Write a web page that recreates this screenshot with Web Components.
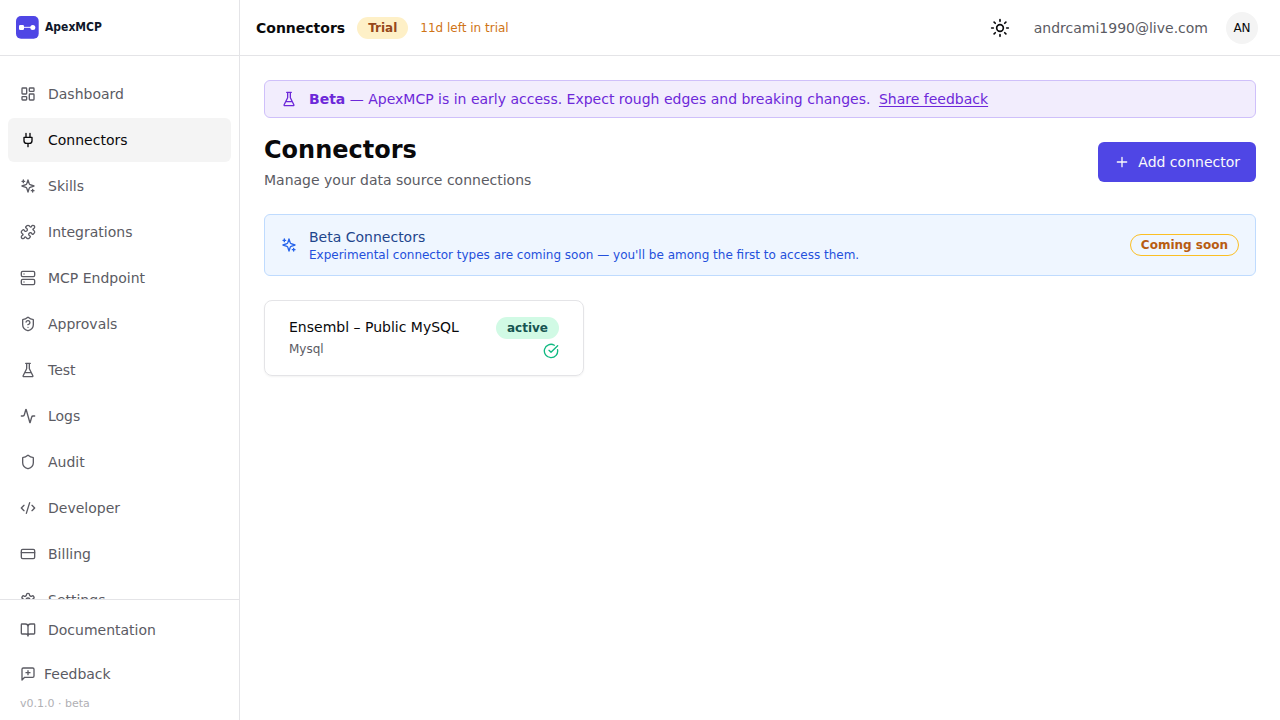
<!DOCTYPE html>
<html lang="en">
<head>
<meta charset="utf-8">
<meta name="viewport" content="width=device-width, initial-scale=1">
<title>Connectors · ApexMCP</title>
<style>
    :root {
        --fg: #09090b;
        --muted: #5b5b63;
        --border: #e4e4e7;
        --accent: #f4f4f4;
        --primary: #4f46e5;
    }

    body {
        margin: 0;
        font: 14px/20px "DejaVu Sans", sans-serif;
        color: var(--fg);
        background: #fff;
    }

    .email {
        color: var(--muted);
    }

    .trial-left {
        font-size: 12px;
        line-height: 16px;
        color: #cf7415;
    }

    .topbar-title {
        margin: 0;
        font-size: 14px;
        line-height: 20px;
    }
</style>
</head>
<body>
<app-shell>
    <side-nav slot="sidebar">
        <nav-link href="#dashboard" icon="dashboard">Dashboard</nav-link>
        <nav-link href="#connectors" icon="plug" active>Connectors</nav-link>
        <nav-link href="#skills" icon="sparkles">Skills</nav-link>
        <nav-link href="#integrations" icon="puzzle">Integrations</nav-link>
        <nav-link href="#endpoint" icon="server">MCP Endpoint</nav-link>
        <nav-link href="#approvals" icon="shieldQuestion">Approvals</nav-link>
        <nav-link href="#test" icon="flask">Test</nav-link>
        <nav-link href="#logs" icon="activity">Logs</nav-link>
        <nav-link href="#audit" icon="shield">Audit</nav-link>
        <nav-link href="#developer" icon="code">Developer</nav-link>
        <nav-link href="#billing" icon="card">Billing</nav-link>
        <nav-link href="#settings" icon="settings">Settings</nav-link>
        <nav-link slot="footer" href="#docs" icon="book">Documentation</nav-link>
        <feedback-button slot="footer">Feedback</feedback-button>
        <span slot="version">v0.1.0 · beta</span>
    </side-nav>

    <top-bar slot="header">
        <h2 class="topbar-title">Connectors</h2>
        <status-badge variant="trial">Trial</status-badge>
        <span class="trial-left">11d left in trial</span>
        <span slot="user" class="email">andrcami1990@live.com</span>
        <span slot="initials">AN</span>
    </top-bar>

    <beta-banner href="#feedback" link="Share feedback"><b>Beta</b> — ApexMCP is in early access. Expect rough edges and breaking changes.</beta-banner>

    <page-heading>
        <span slot="title">Connectors</span>
        <span slot="description">Manage your data source connections</span>
        <primary-button slot="action" icon="plus">Add connector</primary-button>
    </page-heading>

    <info-callout>
        <span slot="title">Beta Connectors</span>
        Experimental connector types are coming soon — you'll be among the first to access them.
        <status-badge slot="badge" variant="soon">Coming soon</status-badge>
    </info-callout>

    <card-grid>
        <connector-card>
            <span slot="name">Ensembl – Public MySQL</span>
            <span slot="type">Mysql</span>
            <status-badge slot="status" variant="active">active</status-badge>
        </connector-card>
    </card-grid>
</app-shell>

<script>
const ICONS = {
    dashboard: '<rect x="3" y="3" width="7" height="9" rx="1"/><rect x="14" y="3" width="7" height="5" rx="1"/><rect x="14" y="12" width="7" height="9" rx="1"/><rect x="3" y="16" width="7" height="5" rx="1"/>',
    plug: '<path d="M12 22v-5M9 8V2M15 8V2M18 8v5a4 4 0 0 1-4 4h-4a4 4 0 0 1-4-4V8Z"/>',
    sparkles: '<path d="m12 3-1.912 5.813a2 2 0 0 1-1.275 1.275L3 12l5.813 1.912a2 2 0 0 1 1.275 1.275L12 21l1.912-5.813a2 2 0 0 1 1.275-1.275L21 12l-5.813-1.912a2 2 0 0 1-1.275-1.275L12 3Z"/><path d="M5 3v4M19 17v4M3 5h4M17 19h4"/>',
    puzzle: '<path d="M19.439 7.85c-.049.322.059.648.289.878l1.568 1.568c.47.47.706 1.087.706 1.704s-.235 1.233-.706 1.704l-1.611 1.611a.98.98 0 0 1-.837.276c-.47-.07-.802-.48-.968-.925a2.501 2.501 0 1 0-3.214 3.214c.446.166.855.497.925.968a.979.979 0 0 1-.276.837l-1.61 1.61a2.404 2.404 0 0 1-1.705.707 2.402 2.402 0 0 1-1.704-.706l-1.568-1.568a1.026 1.026 0 0 0-.877-.29c-.493.074-.84.504-1.02.968a2.5 2.5 0 1 1-3.237-3.237c.464-.18.894-.527.967-1.02a1.026 1.026 0 0 0-.289-.877l-1.568-1.568A2.402 2.402 0 0 1 1.998 12c0-.617.236-1.234.706-1.704L4.23 8.77c.24-.24.581-.353.917-.303.515.077.877.528 1.073 1.01a2.5 2.5 0 1 0 3.259-3.259c-.482-.196-.933-.558-1.01-1.073-.05-.336.062-.676.303-.917l1.525-1.525A2.402 2.402 0 0 1 12 1.998c.617 0 1.234.236 1.704.706l1.568 1.568c.23.23.556.338.877.29.493-.074.84-.504 1.02-.968a2.5 2.5 0 1 1 3.237 3.237c-.464.18-.894.527-.967 1.02Z"/>',
    server: '<rect x="2" y="2" width="20" height="8" rx="2"/><rect x="2" y="14" width="20" height="8" rx="2"/><path d="M6 6h.01M6 18h.01"/>',
    shield: '<path d="M20 13c0 5-3.5 7.5-7.66 8.95a1 1 0 0 1-.67-.01C7.5 20.5 4 18 4 13V6a1 1 0 0 1 1-1c2 0 4.5-1.2 6.24-2.72a1.17 1.17 0 0 1 1.52 0C14.51 3.81 17 5 19 5a1 1 0 0 1 1 1z"/>',
    shieldQuestion: '<path d="M20 13c0 5-3.5 7.5-7.66 8.95a1 1 0 0 1-.67-.01C7.5 20.5 4 18 4 13V6a1 1 0 0 1 1-1c2 0 4.5-1.2 6.24-2.72a1.17 1.17 0 0 1 1.52 0C14.51 3.81 17 5 19 5a1 1 0 0 1 1 1z"/><path d="M9.1 9a3 3 0 0 1 5.82 1c0 2-3 3-3 3M12 17h.01"/>',
    flask: '<path d="M10 2v7.527a2 2 0 0 1-.211.896L4.72 20.55a1 1 0 0 0 .9 1.45h12.76a1 1 0 0 0 .9-1.45l-5.069-10.127A2 2 0 0 1 14 9.527V2M8.5 2h7M7 16h10"/>',
    activity: '<path d="M22 12h-2.48a2 2 0 0 0-1.93 1.46l-2.35 8.36a.25.25 0 0 1-.48 0L9.24 2.18a.25.25 0 0 0-.48 0l-2.35 8.36A2 2 0 0 1 4.49 12H2"/>',
    code: '<path d="m18 16 4-4-4-4M6 8l-4 4 4 4M14.5 4l-5 16"/>',
    card: '<rect x="2" y="5" width="20" height="14" rx="2"/><path d="M2 10h20"/>',
    settings: '<path d="M12.22 2h-.44a2 2 0 0 0-2 2v.18a2 2 0 0 1-1 1.73l-.43.25a2 2 0 0 1-2 0l-.15-.08a2 2 0 0 0-2.73.73l-.22.38a2 2 0 0 0 .73 2.73l.15.1a2 2 0 0 1 1 1.72v.51a2 2 0 0 1-1 1.74l-.15.09a2 2 0 0 0-.73 2.73l.22.38a2 2 0 0 0 2.73.73l.15-.08a2 2 0 0 1 2 0l.43.25a2 2 0 0 1 1 1.73V20a2 2 0 0 0 2 2h.44a2 2 0 0 0 2-2v-.18a2 2 0 0 1 1-1.73l.43-.25a2 2 0 0 1 2 0l.15.08a2 2 0 0 0 2.73-.73l.22-.39a2 2 0 0 0-.73-2.73l-.15-.08a2 2 0 0 1-1-1.74v-.5a2 2 0 0 1 1-1.74l.15-.09a2 2 0 0 0 .73-2.73l-.22-.38a2 2 0 0 0-2.73-.73l-.15.08a2 2 0 0 1-2 0l-.43-.25a2 2 0 0 1-1-1.73V4a2 2 0 0 0-2-2z"/><circle cx="12" cy="12" r="3"/>',
    book: '<path d="M12 7v14M3 18a1 1 0 0 1-1-1V4a1 1 0 0 1 1-1h5a4 4 0 0 1 4 4 4 4 0 0 1 4-4h5a1 1 0 0 1 1 1v13a1 1 0 0 1-1 1h-6a3 3 0 0 0-3 3 3 3 0 0 0-3-3z"/>',
    message: '<path d="M21 15a2 2 0 0 1-2 2H7l-4 4V5a2 2 0 0 1 2-2h14a2 2 0 0 1 2 2zM12 7v6M9 10h6"/>',
    sun: '<circle cx="12" cy="12" r="4"/><path d="M12 2v2M12 20v2M4.93 4.93l1.41 1.41M17.66 17.66l1.41 1.41M2 12h2M20 12h2M6.34 17.66l-1.41 1.41M19.07 4.93l-1.41 1.41"/>',
    plus: '<path d="M5 12h14M12 5v14"/>',
    check: '<path d="M21.801 10A10 10 0 1 1 17 3.335"/><path d="m9 11 3 3L22 4"/>'
};

class AppIcon extends HTMLElement {
    constructor() {
        super();
        this.attachShadow({ mode: 'open' });
    }

    connectedCallback() {
        this.shadowRoot.innerHTML = `
            <style>
                :host {
                    display: block;
                    flex: none;
                    width: var(--icon-size, 16px);
                    height: var(--icon-size, 16px);
                }
                svg {
                    display: block;
                    width: 100%;
                    height: 100%;
                }
            </style>
            <svg viewBox="0 0 24 24" fill="none" stroke="currentColor" stroke-width="2" stroke-linecap="round" stroke-linejoin="round" aria-hidden="true">${ICONS[this.getAttribute('name')]}</svg>
        `;
    }
}

class AppShell extends HTMLElement {
    constructor() {
        super();
        this.attachShadow({ mode: 'open' });
        this.shadowRoot.innerHTML = `
            <style>
                :host {
                    display: grid;
                    grid-template-columns: 240px minmax(0, 1fr);
                    height: 100vh;
                }
                .content {
                    display: flex;
                    flex-direction: column;
                    min-height: 0;
                }
                main {
                    flex: 1;
                    padding: 24px;
                    overflow-y: auto;
                }
            </style>
            <slot name="sidebar"></slot>
            <div class="content">
                <slot name="header"></slot>
                <main><slot></slot></main>
            </div>
        `;
    }
}

class AppLogo extends HTMLElement {
    constructor() {
        super();
        this.attachShadow({ mode: 'open' });
        this.shadowRoot.innerHTML = `
            <style>
                :host {
                    display: flex;
                    align-items: flex-start;
                    gap: 6px;
                    font: bold 12px/22px "DejaVu Sans Condensed", "Noto Sans", sans-serif;
                    color: #0f172a;
                }
                svg {
                    display: block;
                }
            </style>
            <svg width="23" height="23" viewBox="0 0 23 23" aria-hidden="true">
                <rect width="22.7" height="22.7" rx="5" fill="#4f46e5"/>
                <path d="M6 11.4h11" stroke="#fff" stroke-opacity=".8" stroke-width="1.2"/>
                <rect x="3" y="9" width="5" height="5" rx="1.2" fill="#fff"/>
                <circle cx="16.8" cy="11.5" r="2.5" fill="#fff"/>
            </svg>
            <span>ApexMCP</span>
        `;
    }
}

class SideNav extends HTMLElement {
    constructor() {
        super();
        this.attachShadow({ mode: 'open' });
        this.shadowRoot.innerHTML = `
            <style>
                :host {
                    display: flex;
                    flex-direction: column;
                    min-height: 0;
                    border-right: 1px solid var(--border);
                }
                .brand {
                    display: flex;
                    align-items: center;
                    flex: none;
                    box-sizing: border-box;
                    height: 56px;
                    padding: 0 16px;
                    border-bottom: 1px solid var(--border);
                }
                nav {
                    display: flex;
                    flex-direction: column;
                    flex: 1;
                    gap: 2px;
                    min-height: 0;
                    padding: 16px 8px;
                    overflow-y: auto;
                    scrollbar-width: none;
                }
                footer {
                    padding: 8px;
                    border-top: 1px solid var(--border);
                }
                .version {
                    padding: 0 12px;
                    font-size: 11px;
                    line-height: 16px;
                    color: #b0b0b4;
                }
            </style>
            <div class="brand"><app-logo></app-logo></div>
            <nav><slot></slot></nav>
            <footer>
                <slot name="footer"></slot>
                <div class="version"><slot name="version"></slot></div>
            </footer>
        `;
    }
}

class NavLink extends HTMLElement {
    constructor() {
        super();
        this.attachShadow({ mode: 'open' });
    }

    connectedCallback() {
        this.shadowRoot.innerHTML = `
            <style>
                :host {
                    display: block;
                    flex: none;
                }
                a {
                    display: flex;
                    align-items: center;
                    gap: 12px;
                    padding: 12px;
                    border-radius: 6px;
                    color: var(--muted);
                    text-decoration: none;
                }
                a:hover,
                :host([active]) a {
                    background: var(--accent);
                    color: var(--fg);
                }
            </style>
            <a href="${this.getAttribute('href')}">
                <app-icon name="${this.getAttribute('icon')}"></app-icon>
                <slot></slot>
            </a>
        `;
    }
}

class FeedbackButton extends HTMLElement {
    constructor() {
        super();
        this.attachShadow({ mode: 'open' });
        this.shadowRoot.innerHTML = `
            <style>
                :host {
                    display: block;
                }
                button {
                    display: flex;
                    align-items: center;
                    gap: 8px;
                    width: 100%;
                    padding: 12px;
                    border: none;
                    border-radius: 6px;
                    background: none;
                    font: inherit;
                    color: var(--muted);
                    cursor: pointer;
                }
            </style>
            <button type="button"><app-icon name="message"></app-icon><slot></slot></button>
        `;
    }
}

class TopBar extends HTMLElement {
    constructor() {
        super();
        this.attachShadow({ mode: 'open' });
        this.shadowRoot.innerHTML = `
            <style>
                :host {
                    display: flex;
                    justify-content: space-between;
                    align-items: center;
                    flex: none;
                    box-sizing: border-box;
                    height: 56px;
                    padding: 0 16px;
                    border-bottom: 1px solid var(--border);
                }
                .left,
                .right {
                    display: flex;
                    align-items: center;
                    gap: 12px;
                }
                button {
                    display: grid;
                    place-items: center;
                    width: 44px;
                    height: 44px;
                    padding: 0;
                    border: none;
                    border-radius: 6px;
                    background: none;
                    font: inherit;
                    color: var(--fg);
                    cursor: pointer;
                }
                .theme {
                    --icon-size: 20px;
                }
                .avatar {
                    display: grid;
                    place-items: center;
                    width: 32px;
                    height: 32px;
                    border-radius: 50%;
                    background: var(--accent);
                    font-size: 12px;
                    line-height: 16px;
                }
            </style>
            <div class="left"><slot></slot></div>
            <div class="right">
                <button class="theme" type="button" aria-label="Toggle theme"><app-icon name="sun"></app-icon></button>
                <slot name="user"></slot>
                <button type="button"><span class="avatar"><slot name="initials"></slot></span></button>
            </div>
        `;
    }
}

class StatusBadge extends HTMLElement {
    constructor() {
        super();
        this.attachShadow({ mode: 'open' });
        this.shadowRoot.innerHTML = `
            <style>
                :host {
                    display: block;
                    flex: none;
                    padding: 2px 10px;
                    border: 1px solid transparent;
                    border-radius: 11px;
                    font-size: 12px;
                    font-weight: bold;
                    line-height: 16px;
                    white-space: nowrap;
                }
                :host([variant="trial"]) {
                    background: #fef0c7;
                    color: #964719;
                }
                :host([variant="soon"]) {
                    border-color: #fbbf24;
                    color: #b85c12;
                }
                :host([variant="active"]) {
                    background: #d1fae5;
                    color: #165551;
                }
            </style>
            <slot></slot>
        `;
    }
}

class BetaBanner extends HTMLElement {
    constructor() {
        super();
        this.attachShadow({ mode: 'open' });
    }

    connectedCallback() {
        this.shadowRoot.innerHTML = `
            <style>
                :host {
                    display: flex;
                    align-items: center;
                    gap: 12px;
                    margin-bottom: 16px;
                    padding: 8px 16px;
                    border: 1px solid #cfc0fa;
                    border-radius: 6px;
                    background: #f2edfd;
                    color: #6d28d9;
                }
                a {
                    margin-left: 4px;
                    color: inherit;
                    text-underline-offset: 2px;
                }
            </style>
            <app-icon name="flask"></app-icon>
            <div><slot></slot> <a href="${this.getAttribute('href')}">${this.getAttribute('link')}</a></div>
        `;
    }
}

class PageHeading extends HTMLElement {
    constructor() {
        super();
        this.attachShadow({ mode: 'open' });
        this.shadowRoot.innerHTML = `
            <style>
                :host {
                    display: flex;
                    justify-content: space-between;
                    align-items: center;
                    margin-bottom: 24px;
                }
                h1 {
                    margin: 0;
                    font-size: 24px;
                    line-height: 32px;
                }
                p {
                    margin: 4px 0 0;
                    color: var(--muted);
                }
            </style>
            <div>
                <h1><slot name="title"></slot></h1>
                <p><slot name="description"></slot></p>
            </div>
            <slot name="action"></slot>
        `;
    }
}

class PrimaryButton extends HTMLElement {
    constructor() {
        super();
        this.attachShadow({ mode: 'open' });
    }

    connectedCallback() {
        this.shadowRoot.innerHTML = `
            <style>
                :host {
                    display: block;
                }
                button {
                    display: flex;
                    align-items: center;
                    gap: 8px;
                    padding: 10px 16px;
                    border: none;
                    border-radius: 6px;
                    background: var(--primary);
                    font: inherit;
                    color: #fafafa;
                    cursor: pointer;
                }
            </style>
            <button type="button"><app-icon name="${this.getAttribute('icon')}"></app-icon><slot></slot></button>
        `;
    }
}

class InfoCallout extends HTMLElement {
    constructor() {
        super();
        this.attachShadow({ mode: 'open' });
        this.shadowRoot.innerHTML = `
            <style>
                :host {
                    display: flex;
                    align-items: center;
                    gap: 12px;
                    margin-bottom: 24px;
                    padding: 12px 16px;
                    border: 1px solid #bfdbfe;
                    border-radius: 6px;
                    background: #eff6ff;
                }
                app-icon {
                    color: #2563eb;
                }
                .text {
                    flex: 1;
                }
                .title {
                    color: #1e458c;
                }
                .description {
                    font-size: 12px;
                    line-height: 16px;
                    color: #2450dc;
                }
            </style>
            <app-icon name="sparkles"></app-icon>
            <div class="text">
                <div class="title"><slot name="title"></slot></div>
                <div class="description"><slot></slot></div>
            </div>
            <slot name="badge"></slot>
        `;
    }
}

class CardGrid extends HTMLElement {
    constructor() {
        super();
        this.attachShadow({ mode: 'open' });
        this.shadowRoot.innerHTML = `
            <style>
                :host {
                    display: grid;
                    grid-template-columns: repeat(3, minmax(0, 1fr));
                    gap: 16px;
                }
            </style>
            <slot></slot>
        `;
    }
}

class ConnectorCard extends HTMLElement {
    constructor() {
        super();
        this.attachShadow({ mode: 'open' });
        this.shadowRoot.innerHTML = `
            <style>
                :host {
                    display: flex;
                    justify-content: space-between;
                    align-items: flex-start;
                    padding: 16px 24px;
                    border: 1px solid var(--border);
                    border-radius: 8px;
                    box-shadow: 0 1px 2px rgba(0, 0, 0, .05);
                }
                .type {
                    margin-top: 4px;
                    font-size: 12px;
                    line-height: 16px;
                    color: var(--muted);
                }
                .status {
                    display: flex;
                    flex-direction: column;
                    align-items: flex-end;
                    gap: 4px;
                }
                app-icon {
                    color: #10b981;
                }
            </style>
            <div>
                <div><slot name="name"></slot></div>
                <div class="type"><slot name="type"></slot></div>
            </div>
            <div class="status">
                <slot name="status"></slot>
                <app-icon name="check"></app-icon>
            </div>
        `;
    }
}

customElements.define('app-icon', AppIcon);
customElements.define('app-logo', AppLogo);
customElements.define('app-shell', AppShell);
customElements.define('side-nav', SideNav);
customElements.define('nav-link', NavLink);
customElements.define('feedback-button', FeedbackButton);
customElements.define('top-bar', TopBar);
customElements.define('status-badge', StatusBadge);
customElements.define('beta-banner', BetaBanner);
customElements.define('page-heading', PageHeading);
customElements.define('primary-button', PrimaryButton);
customElements.define('info-callout', InfoCallout);
customElements.define('card-grid', CardGrid);
customElements.define('connector-card', ConnectorCard);
</script>
</body>
</html>
